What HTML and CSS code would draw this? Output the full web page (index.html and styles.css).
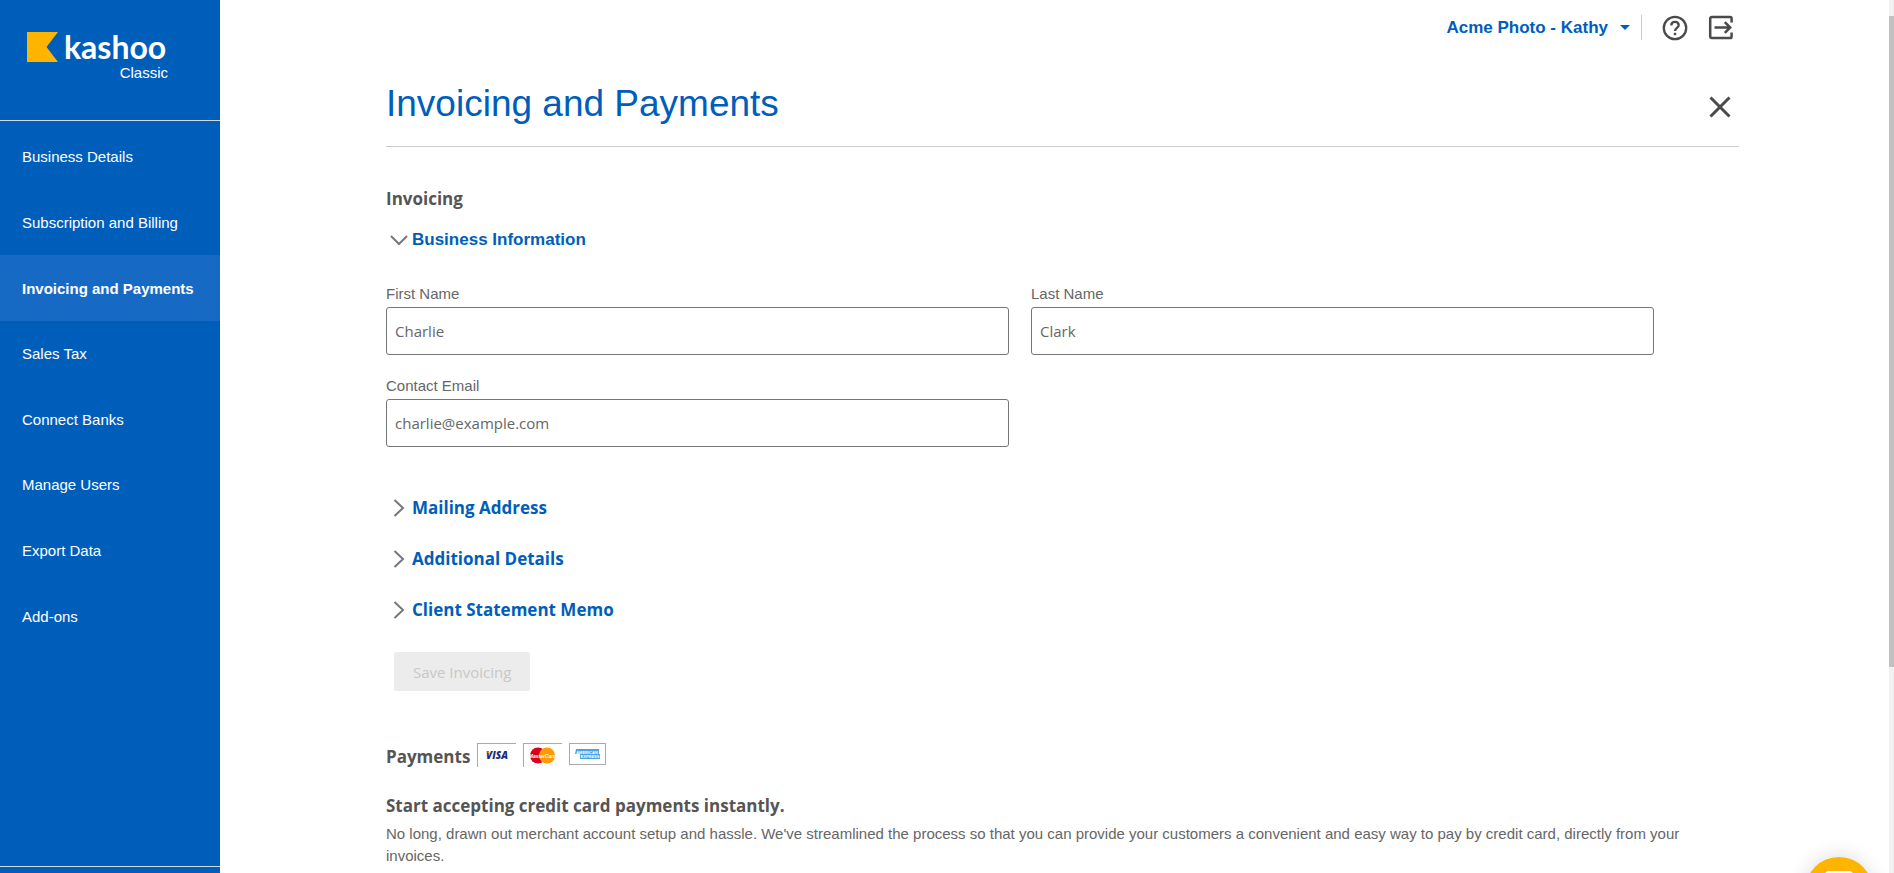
FILE: index.html
```html
<!DOCTYPE html>
<html lang="en">

<head>
    <meta charset="UTF-8">
    <meta name="viewport" content="width=device-width, initial-scale=1.0">
    <title>Kashoo Classic - Invoicing and Payments</title>
    <link rel="stylesheet" href="styles.css">
</head>

<body>

    <div class="layout">
        <!-- Sidebar -->
        <aside class="sidebar">
            <div class="brand">
                <div class="logo">
                    <svg class="logo-flag" viewBox="0 0 31 30" aria-hidden="true">
                        <path d="M0 0H31L19.5 15L31 30H0Z" fill="#ffb400" />
                    </svg>
                    <span class="logo-name">kashoo</span>
                </div>
                <div class="edition">Classic</div>
            </div>
            <nav class="menu">
                <a href="#">Business Details</a>
                <a href="#">Subscription and Billing</a>
                <a href="#" class="active">Invoicing and Payments</a>
                <a href="#">Sales Tax</a>
                <a href="#">Connect Banks</a>
                <a href="#">Manage Users</a>
                <a href="#">Export Data</a>
                <a href="#">Add-ons</a>
            </nav>
            <div class="sidebar-footer"></div>
        </aside>

        <!-- Page -->
        <main class="main">
            <div class="topbar">
                <button type="button" class="account">Acme Photo - Kathy <span class="caret"></span></button>
                <a href="#" class="top-icon" aria-label="Help">
                    <svg width="26" height="26" viewBox="0 0 26 26" fill="none" stroke="#4a4a4a" stroke-width="2.3">
                        <circle cx="13" cy="13" r="11.2" />
                        <path d="M9.3 10.4C9.3 8.2 10.9 6.9 13 6.9S16.7 8.3 16.7 10.3C16.7 12.8 13 13.2 13 16" />
                        <path d="M13 17.8V20.2" stroke-width="2.4" />
                    </svg>
                </a>
                <a href="#" class="top-icon" aria-label="Log out">
                    <svg width="26" height="26" viewBox="0 0 26 26" fill="none" stroke="#4a4a4a" stroke-width="2.5">
                        <path d="M23.6 7.5V3.6Q23.6 2 22 2H4Q2.2 2 2.2 3.8V21.2Q2.2 23 4 23H22Q23.6 23 23.6 21.4V17.5" />
                        <path d="M6.5 12.5H21.5M16.8 7.2L22.2 12.5L16.8 17.8" />
                    </svg>
                </a>
            </div>

            <header class="page-header">
                <h1>Invoicing and Payments</h1>
                <button type="button" class="close" aria-label="Close">
                    <svg width="22" height="22" viewBox="0 0 22 22" stroke="#4a4a4a" stroke-width="3">
                        <path d="M1.5 1.5L20.5 20.5M20.5 1.5L1.5 20.5" />
                    </svg>
                </button>
            </header>

            <form>
                <h2>Invoicing</h2>
                <button type="button" class="section-toggle open">
                    <svg width="20" height="18" viewBox="0 0 20 18" fill="none" stroke="#777" stroke-width="2">
                        <path d="M2 5L10 13L18 5" />
                    </svg>
                    Business Information
                </button>

                <div class="fields">
                    <div class="field">
                        <label for="firstName">First Name</label>
                        <input type="text" id="firstName" value="Charlie">
                    </div>
                    <div class="field">
                        <label for="lastName">Last Name</label>
                        <input type="text" id="lastName" value="Clark">
                    </div>
                    <div class="field">
                        <label for="email">Contact Email</label>
                        <input type="email" id="email" value="charlie@example.com">
                    </div>
                </div>

                <div class="sections">
                    <button type="button" class="section-toggle">
                        <svg width="20" height="18" viewBox="0 0 20 18" fill="none" stroke="#777" stroke-width="2">
                            <path d="M5.5 1L14 9L5.5 17" />
                        </svg>
                        Mailing Address
                    </button>
                    <button type="button" class="section-toggle">
                        <svg width="20" height="18" viewBox="0 0 20 18" fill="none" stroke="#777" stroke-width="2">
                            <path d="M5.5 1L14 9L5.5 17" />
                        </svg>
                        Additional Details
                    </button>
                    <button type="button" class="section-toggle">
                        <svg width="20" height="18" viewBox="0 0 20 18" fill="none" stroke="#777" stroke-width="2">
                            <path d="M5.5 1L14 9L5.5 17" />
                        </svg>
                        Client Statement Memo
                    </button>
                </div>

                <button type="submit" class="save" disabled>Save Invoicing</button>
            </form>

            <section class="payments">
                <div class="payments-title">
                    <h2>Payments</h2>
                    <svg class="card open-edge" viewBox="0 0 38 23" role="img" aria-label="Visa">
                        <text x="8" y="15" class="visa">VISA</text>
                        <path d="M8 7.5H11L12 10Z" fill="#f7a600" />
                    </svg>
                    <svg class="card open-edge" viewBox="0 0 38 23" role="img" aria-label="MasterCard">
                        <circle cx="14" cy="11.5" r="8" fill="#d9001b" />
                        <circle cx="23" cy="11.5" r="8" fill="#ff9a00" />
                        <text x="18.5" y="13.5" class="mastercard">MasterCard</text>
                    </svg>
                    <svg class="card amex-card" viewBox="0 0 35 20" role="img" aria-label="American Express">
                        <path d="M6 5H29V10H30V15H10V10H5Z" fill="#4ba3e3" />
                        <text x="17" y="10" class="amex">AMERICAN</text>
                        <text x="20" y="14" class="amex">EXPRESS</text>
                    </svg>
                </div>
                <h3>Start accepting credit card payments instantly.</h3>
                <p>No long, drawn out merchant account setup and hassle. We've streamlined the process so that you can provide your customers a convenient and easy way to pay by credit card, directly from your invoices.</p>
            </section>
        </main>

        <div class="scroll-track">
            <div class="scroll-thumb"></div>
        </div>
    </div>

    <button type="button" class="chat" aria-label="Open chat">
        <svg width="28" height="32" viewBox="0 0 28 32" aria-hidden="true">
            <path d="M4 0H24Q28 0 28 4V32L21 27H4Q0 27 0 23V4Q0 0 4 0Z" fill="#fff" />
        </svg>
    </button>

</body>

</html>
```
FILE: styles.css
```css
* {
    box-sizing: border-box;
}

body {
    margin: 0;
    font-family: "Liberation Sans", Arial, sans-serif;
    font-size: 15px;
    color: #666;
    background-color: #fff;
    overflow: hidden;
}

button {
    font: inherit;
    border: none;
    padding: 0;
    background: none;
    cursor: pointer;
}

svg {
    display: block;
}

.layout {
    display: flex;
    height: 100vh;
}

/* Sidebar */
.sidebar {
    display: flex;
    flex-direction: column;
    flex: none;
    width: 220px;
    background-color: #005ebb;
    color: #fff;
}

.brand {
    height: 121px;
    padding: 30px 52px 0 27px;
    border-bottom: 1px solid #d5dbe2;
}

.logo {
    display: flex;
    align-items: center;
    gap: 6px;
    height: 34px;
}

.logo-flag {
    width: 31px;
    height: 30px;
}

.logo-name {
    font-family: Lato, sans-serif;
    font-size: 32px;
    font-weight: bold;
    line-height: 34px;
}

.edition {
    text-align: right;
    line-height: 18px;
}

.menu {
    display: flex;
    flex-direction: column;
    height: 525px;
    margin-top: 3px;
}

.menu a {
    display: flex;
    align-items: center;
    flex: 1;
    padding: 0 22px;
    color: #fff;
    text-decoration: none;
    white-space: nowrap;
}

.menu a.active {
    background-color: #176ac4;
    font-weight: bold;
}

.sidebar-footer {
    height: 7px;
    margin-top: auto;
    border-top: 1px solid #d5dbe2;
}

/* Main */
.main {
    flex: 1;
    min-width: 0;
    padding: 0 150px 0 166px;
    overflow: hidden;
}

.topbar {
    display: flex;
    align-items: center;
    justify-content: flex-end;
    height: 55px;
    padding-right: 5px;
    gap: 20px;
}

.account {
    display: flex;
    align-items: center;
    gap: 12px;
    height: 25px;
    padding-right: 11px;
    border-right: 1px solid #ccc;
    color: #005ebb;
    font-size: 17px;
    font-weight: bold;
}

.caret {
    border: 5px solid transparent;
    border-top-color: #005ebb;
    border-bottom: none;
}

.page-header {
    display: flex;
    align-items: center;
    justify-content: space-between;
    height: 92px;
    padding: 6px 8px 0 0;
    border-bottom: 1px solid #ccc;
}

h1 {
    margin: 0;
    color: #005ebb;
    font-size: 37px;
    font-weight: normal;
}

.close {
    margin-top: 6px;
}

h2,
h3 {
    margin: 0;
    color: #555;
    font-family: "Open Sans", sans-serif;
    font-size: 17px;
    font-weight: bold;
    line-height: 24px;
}

form h2 {
    margin-top: 40px;
}

.section-toggle {
    display: flex;
    align-items: center;
    gap: 3px;
    padding-left: 3px;
    color: #005ebb;
    font-family: "Open Sans", sans-serif;
    font-size: 17px;
    font-weight: bold;
    line-height: 24px;
}

.section-toggle.open {
    margin-top: 17px;
    font-family: "Liberation Sans", Arial, sans-serif;
}

.fields {
    display: grid;
    grid-template-columns: 1fr 1fr;
    gap: 20px 22px;
    margin: 31px 85px 0 0;
}

.field label {
    display: block;
    margin-bottom: 2px;
    line-height: 22px;
}

.field input {
    display: block;
    width: 100%;
    height: 48px;
    padding: 0 8px;
    border: 1px solid #767676;
    border-radius: 3px;
    color: #666;
    font-family: "Open Sans", sans-serif;
    font-size: 15px;
}

.sections {
    display: grid;
    gap: 27px;
    justify-items: start;
    margin-top: 49px;
}

.save {
    height: 39px;
    margin: 30px 0 0 8px;
    padding: 0 19px;
    border-radius: 2px;
    background-color: #ececec;
    color: #c8c8c8;
    font-family: "Open Sans", sans-serif;
    font-size: 15px;
}

/* Payments */
.payments {
    margin-top: 52px;
}

.payments-title {
    display: flex;
    align-items: flex-start;
    gap: 7px;
}

.payments-title h2 {
    margin-top: 2px;
}

.card {
    width: 39px;
    height: 24px;
    border: 1px solid #aaa;
}

.open-edge {
    border-right: none;
    border-bottom: none;
}

.amex-card {
    width: 37px;
    height: 22px;
}

.visa {
    fill: #1a2b80;
    font-family: "Open Sans", sans-serif;
    font-size: 10px;
    font-style: italic;
    font-weight: 800;
}

.mastercard {
    fill: #fff;
    font-size: 5px;
    font-style: italic;
    font-weight: bold;
    text-anchor: middle;
}

.amex {
    fill: #fff;
    font-size: 4px;
    font-weight: bold;
    text-anchor: middle;
}

.payments h3 {
    margin-top: 25px;
}

.payments p {
    margin: 5px 0 0;
    line-height: 22px;
}

.scroll-track {
    flex: none;
    width: 5px;
    padding-top: 16px;
    background-color: #f1f1f1;
}

.scroll-thumb {
    height: 76%;
    background-color: #c1c1c1;
}

.chat {
    position: fixed;
    right: 21px;
    bottom: -52px;
    width: 68px;
    height: 68px;
    border-radius: 50%;
    background-color: #ffb400;
    box-shadow: 0 0 20px rgba(0, 0, 0, 0.15);
}

.chat svg {
    margin: -8px auto 0;
}
```
